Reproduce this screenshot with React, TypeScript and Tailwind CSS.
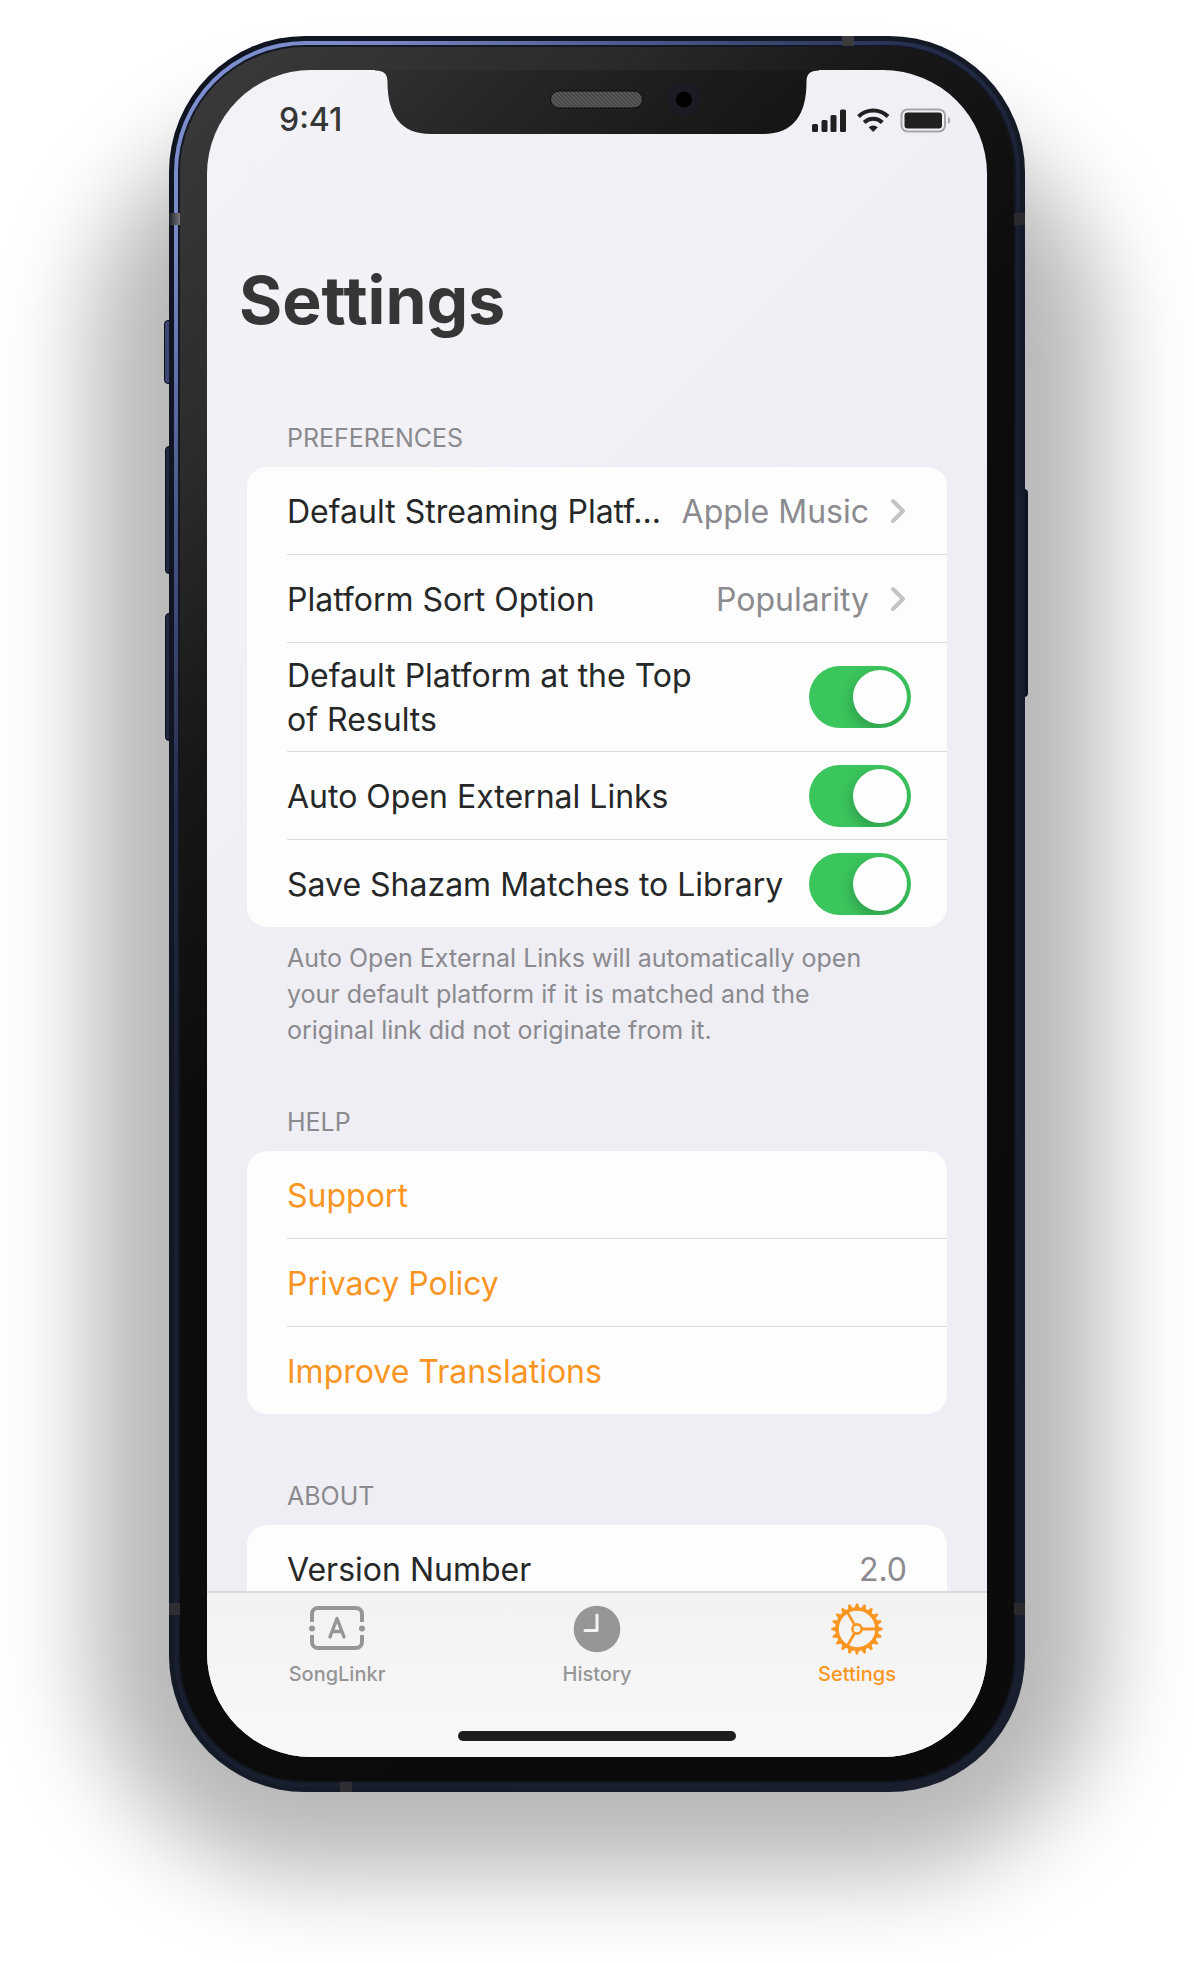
import { useState, type ReactNode } from "react";

const label = "pt-[2px] text-[32px] leading-[44px] text-[#262828]";
const detail = "pt-[2px] text-[32px] leading-[44px] text-[#8b8b8f]";

function Chevron() {
  return (
    <svg viewBox="0 0 16 26" className="h-[26px] w-4 shrink-0" fill="none" stroke="#c3c3c6" strokeWidth="4" strokeLinecap="round" strokeLinejoin="round" aria-hidden="true">
      <path d="M2 3l10 10L2 23" />
    </svg>
  );
}

function LinkRow({ title, value }: { title: string; value: string }) {
  return (
    <li className="border-b border-[#dcdcde] last:border-0">
      <button type="button" className="flex h-[87px] w-full items-center justify-between pr-10 text-left">
        <span className={`${label} whitespace-nowrap`}>{title}</span>
        <span className="flex items-center gap-[22px]">
          <span className={`${detail} whitespace-nowrap`}>{value}</span>
          <Chevron />
        </span>
      </button>
    </li>
  );
}

function ToggleRow({ title, tall = false }: { title: string; tall?: boolean }) {
  const [on, setOn] = useState(true);
  return (
    <li className="border-b border-[#dcdcde] last:border-0">
      <label className={`flex items-center justify-between pr-9 ${tall ? "h-[108px]" : "h-[87px]"}`}>
        <span className={`${label} ${tall ? "max-w-[430px]" : "whitespace-nowrap"}`}>{title}</span>
        <span className="relative flex h-[62px] w-[102px] shrink-0">
          <input
            type="checkbox"
            role="switch"
            checked={on}
            onChange={(e) => setOn(e.target.checked)}
            className="peer h-full w-full cursor-pointer appearance-none rounded-full bg-[#d9d9dc] checked:bg-[#3bc55d]"
          />
          <span className="pointer-events-none absolute inset-0 overflow-hidden rounded-full peer-checked:[&>span]:translate-x-10">
            <span className="absolute top-1 left-1 size-[54px] rounded-full bg-[#fdfdfd] shadow-[-2px_6px_14px_rgba(0,0,0,0.2)]" />
          </span>
        </span>
      </label>
    </li>
  );
}

function Section({ title, children, note }: { title: string; children: ReactNode; note?: string }) {
  return (
    <section className="px-10">
      <h2 className="px-10 text-[25px] leading-8 text-[#8a8a8f] uppercase">{title}</h2>
      <ul className="mt-[13px] rounded-[20px] bg-[#fdfdfd] pl-10">{children}</ul>
      {note && <p className="mt-[13px] -mb-2 max-w-[680px] px-10 text-[25px] leading-9 text-[#8a8a8f]">{note}</p>}
    </section>
  );
}

function HelpRow({ title }: { title: string }) {
  return (
    <li className="border-b border-[#dcdcde] last:border-0">
      <a href="#" className="flex h-[87px] items-center pt-[2px] text-[32px] leading-[44px] text-[#fa9524]">
        {title}
      </a>
    </li>
  );
}

function TicketIcon() {
  return (
    <svg viewBox="0 0 56 52" className="h-[52px] w-14" fill="none" stroke="currentColor" strokeWidth="4" strokeLinecap="round" strokeLinejoin="round" aria-hidden="true">
      <path d="M3 19V11a6 6 0 0 1 6-6h38a6 6 0 0 1 6 6v8M3 32v7a6 6 0 0 0 6 6h38a6 6 0 0 0 6-6v-7" strokeLinecap="butt" />
      <path d="M21 34L28 15.500L35 34M23.500 28.500h9" strokeWidth="3.400" />
      <circle cx="3" cy="25.500" r="3" fill="currentColor" stroke="none" />
      <circle cx="53" cy="25.500" r="3" fill="currentColor" stroke="none" />
    </svg>
  );
}

function ClockIcon() {
  return (
    <svg viewBox="0 0 52 52" className="size-[52px]" aria-hidden="true">
      <circle cx="26" cy="26" r="23.300" fill="currentColor" />
      <path d="M26 12v15.500H14" fill="none" stroke="#f3f3f3" strokeWidth="3" strokeLinecap="round" strokeLinejoin="round" />
    </svg>
  );
}

function GearIcon() {
  const teeth = Array.from({ length: 20 }, (_, i) => i * 18);
  return (
    <svg viewBox="0 0 52 52" className="size-[52px]" fill="none" stroke="currentColor" aria-hidden="true">
      <circle cx="26" cy="26" r="20" strokeWidth="3.600" />
      <circle cx="26" cy="26" r="4.600" strokeWidth="2.600" />
      {[0, 120, 240].map((a) => (
        <path key={a} d="M31 26h14" strokeWidth="2.800" transform={`rotate(${a} 26 26)`} />
      ))}
      {teeth.map((a) => (
        <path key={a} d="M46 23.200L51.600 25V27L46 28.800z" fill="currentColor" stroke="none" transform={`rotate(${a} 26 26)`} />
      ))}
    </svg>
  );
}

function StatusBar() {
  return (
    <div className="flex h-[100px] shrink-0 items-center justify-between pr-9 pl-[72px] text-[#353737]">
      <time className="text-[32px] leading-9 font-medium">9:41</time>
      <svg viewBox="0 0 140 26" className="h-[26px] w-[140px]" fill="#1f2121" role="img" aria-label="Signal, Wi-Fi and battery">
        <rect x="1" y="17" width="6" height="8" rx="1.500" />
        <rect x="10.500" y="13" width="6" height="12" rx="1.500" />
        <rect x="19.500" y="8" width="6" height="17" rx="1.500" />
        <rect x="29" y="2.500" width="6" height="22.500" rx="1.500" />
        <g fill="none" stroke="#1f2121" strokeWidth="4">
          <path d="M47.500 9.500a21 21 0 0 1 29.500 0" />
          <path d="M53.200 15.500a13 13 0 0 1 18.100 0" />
        </g>
        <path d="M62.200 25l-4.600-4.700a6.600 6.600 0 0 1 9.200 0z" />
        <rect x="90.500" y="2.500" width="43.500" height="22" rx="6" fill="none" stroke="#a5a5a9" strokeWidth="2" />
        <rect x="93.500" y="5.500" width="37.500" height="16" rx="3" />
        <path d="M137 10c3 .8 3 6.200 0 7z" fill="#a5a5a9" />
      </svg>
    </div>
  );
}

function Notch() {
  return (
    <div className="absolute top-[-1px] left-1/2 -translate-x-1/2">
      <svg viewBox="0 0 444 66" className="h-[66px] w-[444px]" aria-hidden="true">
        <defs>
          <linearGradient id="notch" x1="0" x2="1" y1="0" y2="0.150">
            <stop offset="0" stopColor="#303030" />
            <stop offset="0.500" stopColor="#222222" />
            <stop offset="1" stopColor="#161616" />
          </linearGradient>
          <pattern id="mesh" width="4" height="4" patternUnits="userSpaceOnUse">
            <rect width="4" height="4" fill="#565656" />
            <path d="M0 0l2 2M2 2l2 2" stroke="#3b3b3b" />
          </pattern>
        </defs>
        <path d="M0 0V1.500C9 1.500 12.500 5 12.500 13C12.500 45 25 65 56 65H388C419 65 431.500 45 431.500 13C431.500 5 435 1.500 444 1.500V0z" fill="url(#notch)" />
        <rect x="175.500" y="22" width="92" height="17" rx="8.500" fill="url(#mesh)" stroke="#0c0c0c" />
        <circle cx="309" cy="30.500" r="16" fill="#1a1b24" />
        <circle cx="309" cy="30.500" r="8" fill="#020203" />
      </svg>
    </div>
  );
}

const tabs = [
  { name: "SongLinkr", Icon: TicketIcon },
  { name: "History", Icon: ClockIcon },
  { name: "Settings", Icon: GearIcon },
];

function TabBar() {
  const [active, setActive] = useState("Settings");
  return (
    <nav className="flex h-[166px] shrink-0 flex-col border-t-2 border-[#d9d9db] bg-linear-to-b from-[#f2f2f2] to-[#f8f8fa]">
      <div className="grid grid-cols-3">
        {tabs.map(({ name, Icon }) => (
          <button
            key={name}
            type="button"
            onClick={() => setActive(name)}
            className={`flex flex-col items-center pt-[10px] text-[20px] leading-6 font-medium ${active === name ? "text-[#fb9622]" : "text-[#969696]"}`}
          >
            <Icon />
            <span className="mt-[7px]">{name}</span>
          </button>
        ))}
      </div>
      <div className="mx-auto mt-auto mb-4 h-[10px] w-[278px] rounded-full bg-[#1c1e1e]" />
    </nav>
  );
}

export default function App() {
  return (
    <div className="min-h-screen overflow-hidden bg-white pt-9 pb-[171px] font-['Inter',sans-serif]">
      <div className="relative mx-auto aspect-[856/1756] w-full max-w-[856px]">
        <div className="absolute top-[84px] -right-[78px] -bottom-[82px] -left-[78px] rounded-[220px] bg-black/28 blur-[46px]" />
        <div className="absolute top-[284px] -left-[5px] h-16 w-2 rounded-l-sm border border-[#0c101c] bg-[#3c4872]" />
        <div className="absolute top-[410px] -left-[4px] h-32 w-2 rounded-l-sm border border-[#0c101c] bg-[#202844]" />
        <div className="absolute top-[577px] -left-[4px] h-32 w-2 rounded-l-sm border border-[#0c101c] bg-[#202844]" />
        <div className="absolute top-[453px] -right-[3px] h-52 w-2 rounded-r-sm bg-[#0e1220]" />
        <div className="relative h-full rounded-[136px] bg-linear-to-br from-[#0f1420] to-[#1a1f2e] p-[5px]">
          <div className="h-full rounded-[131px] bg-linear-[135deg,#8093d4_0%,#7788c4_8%,#4b588c_18%,#232b48_30%,#1a1f2f_40%] p-1">
            <div className="h-full rounded-[127px] bg-[#131722] p-[2px]">
              <div className="h-full rounded-[125px] bg-linear-[135deg,#3b3b3b_0%,#2b2b2b_17%,#181818_28%,#0c0c0c_42%,#0b0b0b_100%] px-[27px] pt-[23px] pb-[24px]">
                <div className="relative flex h-full flex-col overflow-hidden rounded-[104px] bg-linear-[135deg,#f3f2f7_0%,#f2f1f6_20%,#efeef4_40%,#efeef4_100%]">
                  <Notch />
                  <StatusBar />
                  <main className="min-h-0 flex-1 overflow-y-auto [scrollbar-width:none]">
                    <h1 className="px-8 pt-[90px] text-[66px] leading-20 font-bold text-[#353737]">Settings</h1>
                    <div className="mt-[82px] flex flex-col gap-[66px]">
                      <Section
                        title="Preferences"
                        note="Auto Open External Links will automatically open your default platform if it is matched and the original link did not originate from it."
                      >
                        <LinkRow title="Default Streaming Platf..." value="Apple Music" />
                        <LinkRow title="Platform Sort Option" value="Popularity" />
                        <ToggleRow title="Default Platform at the Top of Results" tall />
                        <ToggleRow title="Auto Open External Links" />
                        <ToggleRow title="Save Shazam Matches to Library" />
                      </Section>
                      <Section title="Help">
                        <HelpRow title="Support" />
                        <HelpRow title="Privacy Policy" />
                        <HelpRow title="Improve Translations" />
                      </Section>
                      <Section title="About">
                        <li className="flex h-[88px] items-center justify-between pr-10">
                          <span className={label}>Version Number</span>
                          <span className={detail}>2.0</span>
                        </li>
                      </Section>
                    </div>
                  </main>
                  <TabBar />
                </div>
              </div>
            </div>
          </div>
        </div>
        <div className="absolute top-[177px] left-0 h-3 w-[11px] bg-linear-to-r from-[#20242e] to-[#77777a]" />
        <div className="absolute top-[177px] right-0 h-3 w-[11px] bg-[#2a2a2e]" />
        <div className="absolute bottom-[177px] left-0 h-3 w-[11px] bg-[#2e2e32]" />
        <div className="absolute right-0 bottom-[177px] h-3 w-[11px] bg-[#2a2a2e]" />
        <div className="absolute top-0 right-[171px] h-[10px] w-3 bg-[#3a3a3c]" />
        <div className="absolute bottom-0 left-[171px] h-[10px] w-3 bg-[#2e2e32]" />
      </div>
    </div>
  );
}
